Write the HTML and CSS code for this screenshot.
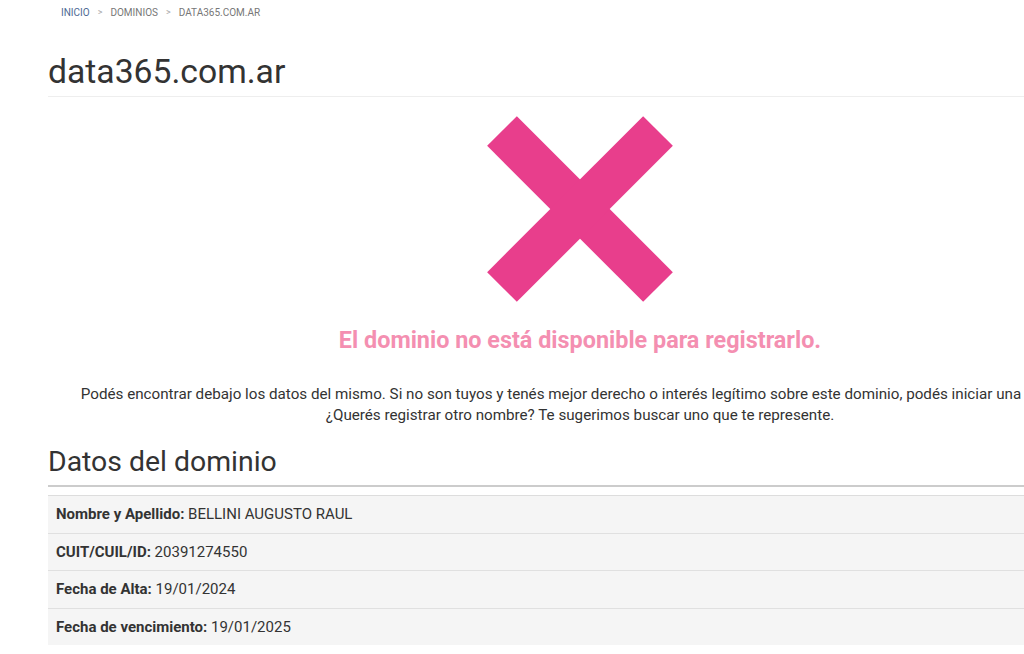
FILE: index.html
```html
<!DOCTYPE html>
<html lang="es">
<head>
<meta charset="utf-8">
<title>data365.com.ar</title>
<link rel="stylesheet" href="styles.css">
</head>
<body>
<div class="container">
  <nav class="breadcrumb">
    <a class="crumb-link" href="#">INICIO</a>
    <span class="sep">&gt;</span>
    <span class="crumb">DOMINIOS</span>
    <span class="sep">&gt;</span>
    <span class="crumb">DATA365.COM.AR</span>
  </nav>
  <h1 class="page-title">data365.com.ar</h1>
  <div class="status">
    <svg class="cross" width="186" height="186" viewBox="0 0 186 186" aria-hidden="true">
      <line x1="15" y1="15" x2="171" y2="171" />
      <line x1="171" y1="15" x2="15" y2="171" />
    </svg>
    <h2 class="status-title">El dominio no está disponible para registrarlo.</h2>
    <p class="status-text">Podés encontrar debajo los datos del mismo. Si no son tuyos y tenés mejor derecho o interés legítimo sobre este dominio, podés iniciar una disputa.<br>¿Querés registrar otro nombre? Te sugerimos buscar uno que te represente.</p>
  </div>
  <h2 class="section-title">Datos del dominio</h2>
  <div class="data-table">
    <div class="row"><b>Nombre y Apellido:</b> BELLINI AUGUSTO RAUL</div>
    <div class="row"><b>CUIT/CUIL/ID:</b> 20391274550</div>
    <div class="row"><b>Fecha de Alta:</b> 19/01/2024</div>
    <div class="row"><b>Fecha de vencimiento:</b> 19/01/2025</div>
  </div>
</div>
</body>
</html>
```

FILE: styles.css
```css
html, body {
  margin: 0;
  padding: 0;
  overflow: hidden;
  background: #fff;
}
body {
  font-family: Roboto, "Liberation Sans", sans-serif;
  color: #333;
  font-size: 15px;
}
.container {
  width: 1064px;
  margin-left: 48px;
}
.breadcrumb {
  display: flex;
  align-items: center;
  gap: 8px;
  height: 24px;
  padding-left: 13px;
  font-size: 10px;
  color: #777;
}
.crumb-link {
  color: #4d6a94;
  text-decoration: none;
}
.sep {
  color: #aaa;
  font-size: 9px;
}
.page-title {
  margin: 24px 0 0;
  font-size: 33.7px;
  font-weight: 400;
  line-height: 48px;
  border-bottom: 1px solid #eee;
  color: #333;
}
.status {
  display: flex;
  flex-direction: column;
  align-items: center;
  text-align: center;
  padding-top: 19px;
}
.cross line {
  stroke: #e83e8c;
  stroke-width: 42;
  stroke-linecap: butt;
}
.status-title {
  margin: 22px 0 0;
  font-size: 23.4px;
  line-height: 32px;
  font-weight: 700;
  color: #f48fb1;
}
.status-text {
  margin: 28px 0 0;
  font-size: 15.2px;
  line-height: 21px;
  white-space: nowrap;
  color: #333;
}
.section-title {
  margin: 16px 0 0;
  font-size: 28.4px;
  font-weight: 400;
  line-height: 40px;
  padding-bottom: 3px;
  border-bottom: 2px solid #ccc;
  color: #333;
}
.data-table {
  margin-top: 8px;
  border-top: 1px solid #ddd;
  background: #f5f5f5;
}
.row {
  padding: 0 8px;
  height: 36.5px;
  line-height: 36.5px;
  border-bottom: 1px solid #e0e0e0;
}
.row:last-child {
  border-bottom: none;
}
.row b {
  font-weight: 700;
}
```
